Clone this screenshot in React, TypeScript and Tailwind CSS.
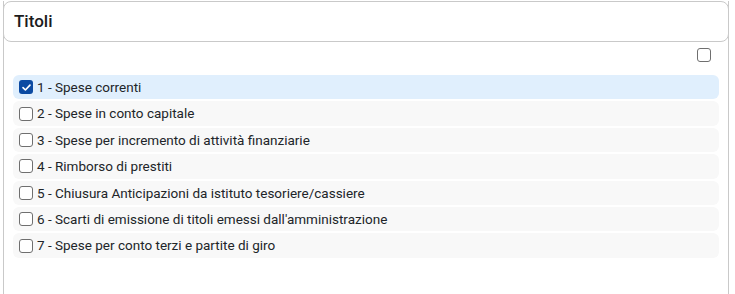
import { FC } from 'react';

const items = [
  '1 - Spese correnti',
  '2 - Spese in conto capitale',
  '3 - Spese per incremento di attività finanziarie',
  '4 - Rimborso di prestiti',
  '5 - Chiusura Anticipazioni da istituto tesoriere/cassiere',
  '6 - Scarti di emissione di titoli emessi dall\'amministrazione',
  '7 - Spese per conto terzi e partite di giro',
];

const Box: FC<{ checked?: boolean }> = ({ checked }) =>
  checked ? (
    <span className="flex size-[14px] shrink-0 items-center justify-center rounded-[3px] bg-[#0b4aa2]">
      <svg viewBox="0 0 12 12" className="size-[11px]" fill="none">
        <path d="M2.2 6.2 4.8 8.7 9.8 3.4" stroke="white" strokeWidth="1.8" strokeLinecap="round" strokeLinejoin="round" />
      </svg>
    </span>
  ) : (
    <span className="size-[14px] shrink-0 rounded-[3px] border border-[#6f6f6f] bg-white" />
  );

const App: FC = () => {
  return (
    <div className="h-[294px] w-[735px] bg-white pt-px font-['Roboto',sans-serif] text-[#212529]">
      <div className="ml-[3px] h-[293px] w-[726px] border-x border-[#c9c9c9]">
        <div className="-mx-px flex h-[41px] items-center rounded-lg border border-[#c9c9c9] bg-white px-[10px] text-[17px] font-medium text-[#1c1c1c]">
          Titoli
        </div>
        <div className="flex justify-end pr-[17px] pt-[6px]">
          <Box />
        </div>
        <div className="mt-[13px] flex flex-col gap-[2px] pl-[9px] pr-[9px]">
          {items.map((t, i) => (
            <div
              key={t}
              className={
                i === 0
                  ? 'flex h-[24.4px] items-center gap-[4px] rounded-md bg-[#e0effd] pl-[6px] text-[13.5px]'
                  : 'flex h-[24.4px] items-center gap-[4px] rounded-md bg-[#f8f8f8] pl-[6px] text-[13.5px]'
              }
            >
              <Box checked={i === 0} />
              <span>{t}</span>
            </div>
          ))}
        </div>
      </div>
    </div>
  );
};

export default App;
